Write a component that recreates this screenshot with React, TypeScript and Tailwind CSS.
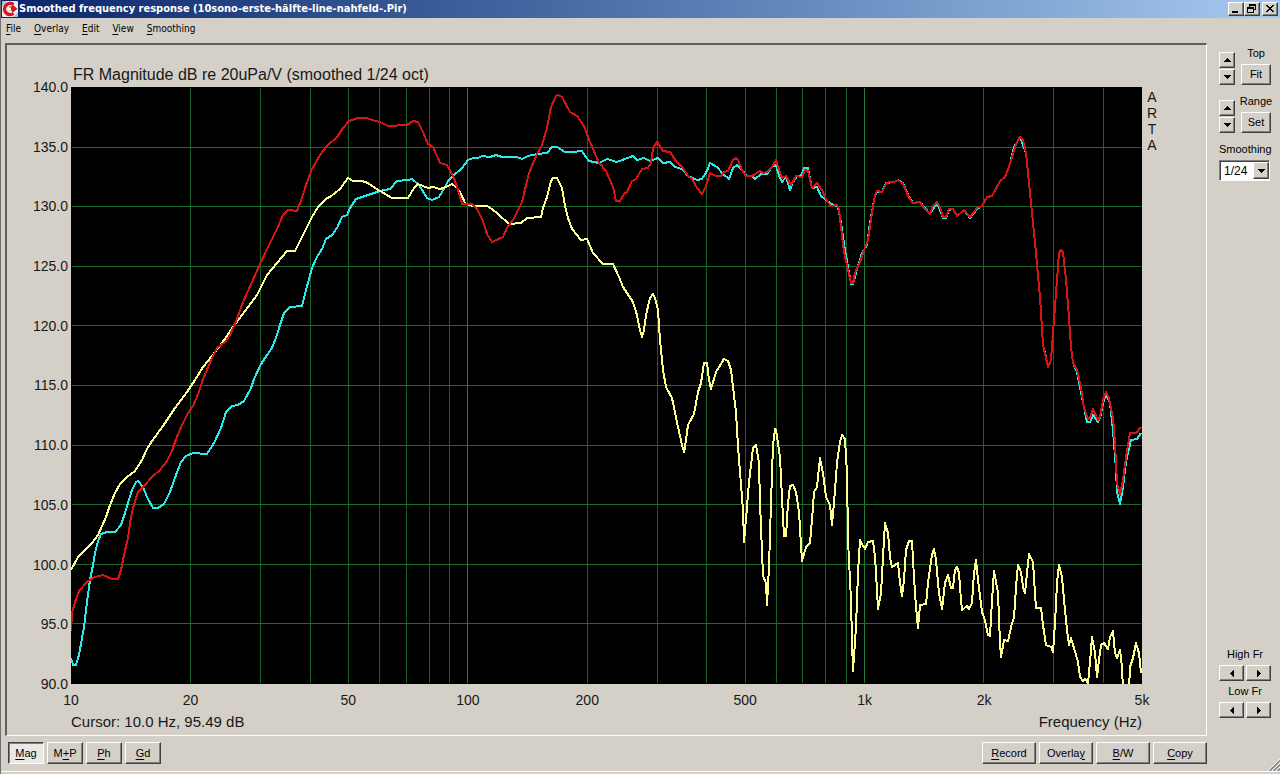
import type { ReactNode } from "react";

const F_MIN = 10;
const F_MAX = 5000;

// Curves are stored in the units of the plot's viewBox.
const PLOT = { x: 71, y: 87, w: 1071, h: 597 };

const YELLOW =
  "71,570 78,557 87,548 92,543 98,535 102,526 106,517 110,505 115,493 120,484 127,477 135,471 142,460 147,449 152,441 163,426 175,408 187,392 195,380 203,367 212,356 222,343 233,327 242,315 257,295 267,275 277,263 287,251 295,251 303,235 312,217 318,207 327,198 330,197 340,189 348,178 353,181 362,181 368,183 375,188 380,191 392,198 408,198 414,188 418,184 423,186 428,188 433,187 440,189 446,187 452,184 457,188 461,194 465,203 472,206 487,206 492,209 498,214 509,224 521,223 527,218 541,217 543,208 547,197 551,181 553,178 557,178 562,188 565,206 568,218 572,229 581,240 587,239 593,253 603,264 613,264 619,277 623,287 627,293 633,302 637,315 640,330 642,337 644,330 646,315 650,298 653,294 655,298 658,310 660,340 663,370 666,387 672,398 678,427 682,445 684,452 685,447 688,425 694,414 698,392 701,383 704,363 707,363 709,380 711,389 716,372 724,359 728,361 731,370 733,387 736,412 738,447 740,472 743,510 744,542 747,507 749,482 753,448 756,445 759,463 760,503 763,576 766,583 767,605 769,567 771,503 773,445 775,429 776,430 780,457 782,498 784,536 786,536 788,503 790,486 793,485 796,492 799,512 802,561 806,547 810,543 813,507 814,492 817,487 820,458 823,473 826,497 830,505 832,525 834,503 837,463 840,442 842,435 845,439 847,473 848,540 851,600 852,640 853,671 856,627 858,573 860,540 862,544 865,549 868,542 873,541 875,557 877,590 878,609 881,593 883,557 885,523 888,533 890,557 892,567 898,563 900,583 902,596 904,580 906,550 909,541 912,541 914,577 916,607 918,628 920,605 926,604 928,583 932,555 934,549 936,560 939,593 942,609 945,583 948,575 951,588 953,588 955,570 957,567 959,573 961,600 962,610 967,606 969,609 972,603 974,573 976,560 978,580 982,612 985,620 988,635 990,636 992,600 994,571 998,593 1000,643 1001,657 1004,640 1008,641 1012,623 1014,618 1016,587 1018,565 1021,572 1023,587 1025,593 1027,573 1029,554 1033,562 1035,593 1036,608 1041,608 1043,625 1046,645 1051,647 1053,652 1055,623 1057,583 1059,565 1062,577 1065,610 1067,630 1069,645 1071,638 1076,655 1078,662 1080,677 1083,681 1085,679 1088,683 1089,673 1091,650 1092,637 1095,653 1097,677 1099,660 1101,645 1104,643 1108,649 1110,637 1113,631 1115,653 1117,658 1120,650 1122,667 1123,690 1129,690 1130,667 1133,658 1136,643 1139,653 1141,673";

const CYAN =
  "71,658 73,665 76,665 79,655 82,638 84,627 87,602 90,580 93,565 95,553 98,541 101,534 107,532 115,532 121,525 125,513 128,503 132,490 136,482 138,481 143,487 147,497 153,508 158,508 164,504 170,492 176,475 181,462 186,456 193,453 207,454 214,443 221,428 226,412 232,406 238,405 244,401 251,388 254,379 261,364 267,355 272,348 277,335 280,325 284,313 290,307 302,306 306,290 312,268 317,257 322,249 326,239 332,235 337,228 342,217 347,215 350,208 356,199 368,195 380,191 390,189 397,181 408,180 412,179 419,185 427,198 432,200 439,197 445,187 448,181 453,176 462,168 468,160 473,158 478,158 482,156 490,157 496,155 502,157 517,157 522,159 528,156 537,154 547,153 552,147 557,147 565,152 573,152 582,151 585,156 589,161 599,163 607,159 617,162 625,159 633,156 637,160 644,158 650,161 658,158 663,163 670,162 675,167 682,169 688,176 697,180 702,179 707,171 710,163 717,167 723,174 729,179 733,168 737,165 742,170 747,176 752,176 755,179 761,174 767,174 772,167 776,165 778,173 782,182 786,177 790,190 793,182 797,176 801,176 804,168 808,168 812,188 817,187 821,196 830,203 838,207 841,223 845,250 851,284 853,284 856,273 862,253 867,245 870,223 875,195 877,192 882,192 886,183 894,182 898,180 903,183 909,197 913,203 920,202 930,214 937,203 943,218 946,218 949,210 953,209 957,216 964,210 970,218 977,209 982,206 987,197 992,196 1000,181 1005,177 1010,164 1014,147 1020,137 1026,153 1032,213 1036,253 1040,297 1043,345 1048,366 1051,360 1053,333 1056,293 1059,253 1061,251 1063,252 1066,280 1069,317 1071,347 1073,363 1077,372 1082,397 1087,422 1090,422 1093,415 1098,422 1100,418 1103,403 1106,395 1110,403 1113,430 1116,470 1117,492 1120,504 1123,487 1126,462 1131,440 1137,439 1141,433";

const RED =
  "71,631 72,613 75,602 79,591 88,581 95,577 103,575 112,579 118,579 121,570 124,555 128,538 130,523 132,512 135,501 138,492 143,487 153,476 160,470 167,461 172,451 176,439 182,425 188,413 193,406 199,392 203,379 212,358 217,348 225,342 230,335 237,319 243,302 252,282 260,264 268,247 277,229 283,215 288,210 297,211 302,198 306,185 312,169 320,155 327,146 337,137 343,128 349,121 358,118 367,118 372,120 380,122 388,126 407,125 413,121 418,122 423,132 428,144 433,147 440,163 447,165 454,178 458,190 462,204 472,204 477,209 483,221 487,234 492,242 503,237 508,226 513,220 522,202 529,173 537,154 542,145 547,128 551,107 556,96 558,95 562,97 570,112 577,116 584,126 590,142 599,163 606,171 613,187 616,201 620,201 624,194 627,192 632,181 636,179 642,169 648,168 651,163 653,148 657,142 663,151 670,152 676,161 683,168 688,176 692,179 697,188 702,194 706,186 710,173 716,176 721,176 724,172 728,171 733,160 736,158 738,160 742,170 746,176 752,176 760,171 763,173 767,172 772,167 776,160 778,167 782,178 786,176 791,185 796,176 802,177 805,170 808,171 812,188 817,183 822,190 827,201 831,206 837,205 839,209 841,227 844,252 848,270 851,283 853,283 855,273 860,262 864,250 868,240 872,213 875,195 877,191 882,192 886,184 889,182 894,182 898,180 903,184 909,198 913,203 920,202 924,208 930,214 933,206 937,202 940,207 943,217 946,217 949,209 953,209 957,216 964,210 970,217 977,208 982,206 987,197 992,196 1000,181 1005,177 1010,164 1015,147 1018,140 1020,137 1023,140 1026,153 1029,183 1032,213 1036,253 1040,297 1043,345 1048,367 1051,360 1053,333 1056,293 1059,253 1061,250 1063,252 1066,280 1069,317 1071,347 1073,363 1077,370 1081,387 1084,408 1088,419 1090,418 1093,409 1098,420 1100,417 1103,400 1106,392 1109,398 1113,418 1115,443 1117,483 1120,495 1123,480 1126,457 1130,433 1136,433 1141,427";

const LEVELS = ["140.0", "135.0", "130.0", "125.0", "120.0", "115.0", "110.0", "105.0", "100.0", "95.0", "90.0"];

const TICKS = [
  { f: 10, label: "10" },
  { f: 20, label: "20" },
  { f: 50, label: "50" },
  { f: 100, label: "100" },
  { f: 200, label: "200" },
  { f: 500, label: "500" },
  { f: 1000, label: "1k" },
  { f: 2000, label: "2k" },
  { f: 5000, label: "5k" },
];

const GRID_FREQS = [
  20, 30, 40, 50, 60, 70, 80, 90, 100, 200, 300, 400, 500, 600, 700, 800, 900, 1000, 2000, 3000, 4000,
];

const RAISED =
  "border border-t-white border-l-white border-r-[#404040] border-b-[#404040] bg-[#d4d0c8] shadow-[inset_-1px_-1px_0_#808080]";

function logPos(f: number) {
  return Math.log(f / F_MIN) / Math.log(F_MAX / F_MIN);
}

// "&" marks the letter that gets the keyboard underline
function Mnemonic({ text }: { text: string }) {
  const at = text.indexOf("&");
  return (
    <span className="whitespace-pre">
      {text.slice(0, at)}
      <u className="underline-offset-2">{text[at + 1]}</u>
      {text.slice(at + 2)}
    </span>
  );
}

function AppIcon() {
  return (
    <svg viewBox="0 0 16 16" className="size-4 shrink-0">
      <rect width="16" height="16" rx="1" fill="#e6f0f4" />
      <path d="M0 0h5L0 5zM16 16h-5l5-5z" fill="#9cc4dc" />
      <path d="M11.5 3.5A5.6 5.6 0 1 0 11.5 12.5" fill="none" stroke="#d81818" strokeWidth="3.4" />
      <path d="M7 5.5h3V3l5.5 5L10 12V9.500H7z" fill="#d81818" />
      <path d="M6 6.500h3v3H6z" fill="#fff" />
    </svg>
  );
}

function CaptionButton({ label, children }: { label: string; children: ReactNode }) {
  return (
    <button aria-label={label} className={`flex h-[14px] w-4 items-center justify-center ${RAISED}`}>
      <svg viewBox="0 0 12 10" className="h-[10px] w-3" shapeRendering="crispEdges">
        {children}
      </svg>
    </button>
  );
}

function TitleBar() {
  return (
    <header className="flex h-[18px] items-center bg-linear-to-r from-[#0a246a] to-[#a6caf0] pr-0.5 pl-px">
      <AppIcon />
      <h1 className="ml-px flex-1 truncate font-['DejaVu_Sans_Condensed','DejaVu_Sans',sans-serif] text-[11px] font-bold text-white">
        Smoothed frequency response (10sono-erste-hälfte-line-nahfeld-.Pir)
      </h1>
      <CaptionButton label="Minimize">
        <path d="M2 7h6v2H2z" />
      </CaptionButton>
      <CaptionButton label="Restore">
        <path d="M3 0h7v6H8V5h1V2H4v1H3z" />
        <path d="M1 3h7v6H1zM2 5v3h5V5z" fillRule="evenodd" />
      </CaptionButton>
      <div className="ml-0.5 flex">
        <CaptionButton label="Close">
          <path d="M2 1h2v1h1v1h2V2h1V1h2v1H9v1H8v1H7v1h1v1h1v1h1v1H8V7H7V6H5v1H4v1H2V7h1V6h1V5h1V4H4V3H3V2H2z" />
        </CaptionButton>
      </div>
    </header>
  );
}

function MenuBar() {
  return (
    <nav className="flex h-5 items-center gap-[13px] pl-[5px] font-['DejaVu_Sans_Condensed','DejaVu_Sans',sans-serif] text-[10px]">
      {["&File", "&Overlay", "&Edit", "&View", "&Smoothing"].map((item) => (
        <button key={item}>
          <Mnemonic text={item} />
        </button>
      ))}
    </nav>
  );
}

function Plot() {
  return (
    <svg
      viewBox={`${PLOT.x} ${PLOT.y} ${PLOT.w} ${PLOT.h}`}
      preserveAspectRatio="none"
      className="col-start-2 row-start-2 h-full w-full bg-black"
      shapeRendering="crispEdges"
      role="img"
      aria-label="Frequency response"
    >
      {GRID_FREQS.map((f) => {
        const x = Math.round(PLOT.x + logPos(f) * 1070) + 0.5;
        return <line key={f} x1={x} x2={x} y1="88" y2="683" stroke={f === 100 || f === 1000 ? "#267a38" : "#17602a"} />;
      })}
      {LEVELS.slice(1, -1).map((level, i) => {
        const y = Math.round(PLOT.y + (i + 1) * 59.6) + 0.5;
        return <line key={level} x1="72" x2="1141" y1={y} y2={y} stroke="#1a6b2c" />;
      })}
      <g fill="none" strokeWidth="2" strokeLinejoin="round">
        <polyline points={CYAN} stroke="#2ceaea" />
        <polyline points={YELLOW} stroke="#ffff92" />
        <polyline points={RED} stroke="#d81414" />
      </g>
    </svg>
  );
}

function ChartPanel() {
  return (
    <section className="grid min-h-0 flex-1 grid-cols-[64px_minmax(0,1fr)_64px] grid-rows-[42px_minmax(0,1fr)_51px] border-t-2 border-r border-b border-l-2 border-t-[#606060] border-r-white border-b-white border-l-[#606060] font-['Liberation_Sans',Arial,sans-serif] text-sm leading-4 text-[#181818]">
      <h2 className="col-start-2 row-start-1 self-end pb-1 pl-0.5 text-base leading-4">
        FR Magnitude dB re 20uPa/V (smoothed 1/24 oct)
      </h2>

      <div className="col-start-1 row-start-2 -my-2 flex flex-col justify-between pr-[3px] text-right">
        {LEVELS.map((level) => (
          <span key={level}>{level}</span>
        ))}
      </div>
      <Plot />
      <div className="col-start-3 row-start-2 flex w-5 flex-col pt-0.5 text-center">
        {["A", "R", "T", "A"].map((letter, i) => (
          <span key={i}>{letter}</span>
        ))}
      </div>

      <div className="col-start-2 row-start-3 pt-2">
        <div className="relative h-4">
          {TICKS.map(({ f, label }) => (
            <span key={f} className="absolute -translate-x-1/2" style={{ left: `${logPos(f) * 100}%` }}>
              {label}
            </span>
          ))}
        </div>
        <div className="flex justify-between pt-[6px] text-[15px] leading-4">
          <span>Cursor: 10.0 Hz, 95.49 dB</span>
          <span>Frequency (Hz)</span>
        </div>
      </div>
    </section>
  );
}

function Toolbar() {
  return (
    <footer className="flex justify-between pt-[6px] pl-[3px] font-['Liberation_Sans',Arial,sans-serif] text-[11px]">
      <div className="flex gap-[3px]">
        <button
          aria-pressed="true"
          className="h-[22px] w-9 border border-t-[#404040] border-r-white border-b-white border-l-[#404040] bg-[#eae8e4] shadow-[inset_1px_1px_0_#808080]"
        >
          <Mnemonic text="&Mag" />
        </button>
        {["M&+P", "&Ph", "&Gd"].map((item) => (
          <button key={item} className={`h-[22px] w-9 ${RAISED}`}>
            <Mnemonic text={item} />
          </button>
        ))}
      </div>
      <div className="flex gap-[3px]">
        {["&Record", "Overla&y", "&B/W", "&Copy"].map((item) => (
          <button key={item} className={`h-[22px] w-[54px] ${RAISED}`}>
            <Mnemonic text={item} />
          </button>
        ))}
      </div>
    </footer>
  );
}

function Spinner({ name }: { name: string }) {
  return (
    <div className="flex flex-col gap-px">
      <button aria-label={`${name} up`} className={`flex h-4 w-4 items-center justify-center ${RAISED}`}>
        <svg viewBox="0 0 7 4" className="h-1 w-[7px]" shapeRendering="crispEdges">
          <path d="M3 0h1v1h1v1h1v1h1v1H0V3h1V2h1V1h1z" />
        </svg>
      </button>
      <button aria-label={`${name} down`} className={`flex h-4 w-4 items-center justify-center ${RAISED}`}>
        <svg viewBox="0 0 7 4" className="h-1 w-[7px]" shapeRendering="crispEdges">
          <path d="M0 0h7v1H6v1H5v1H4v1H3V3H2V2H1V1H0z" />
        </svg>
      </button>
    </div>
  );
}

function ScaleControl({ name, action }: { name: string; action: string }) {
  return (
    <div className="flex items-end gap-[6px]">
      <Spinner name={name} />
      <div className="flex w-[30px] flex-col items-center gap-1">
        <span className="leading-[14px]">{name}</span>
        <button className={`h-[21px] w-[30px] ${RAISED}`}>{action}</button>
      </div>
    </div>
  );
}

function FreqControl({ name }: { name: string }) {
  return (
    <div className="flex flex-col items-center gap-1">
      <span className="leading-[14px]">{name}</span>
      <div className="flex gap-0.5">
        <button aria-label={`${name} lower`} className={`flex h-4 w-[25px] items-center justify-center ${RAISED}`}>
          <svg viewBox="0 0 4 7" className="h-[7px] w-1" shapeRendering="crispEdges">
            <path d="M4 0v7H3V6H2V5H1V4H0V3h1V2h1V1h1V0z" />
          </svg>
        </button>
        <button aria-label={`${name} higher`} className={`flex h-4 w-[25px] items-center justify-center ${RAISED}`}>
          <svg viewBox="0 0 4 7" className="h-[7px] w-1" shapeRendering="crispEdges">
            <path d="M0 0h1v1h1v1h1v1h1v1H3v1H2v1H1v1H0z" />
          </svg>
        </button>
      </div>
    </div>
  );
}

function SidePanel() {
  return (
    <aside className="flex w-[61px] shrink-0 flex-col justify-between pt-[3px] pr-[9px] pb-[53px] font-['Liberation_Sans',Arial,sans-serif] text-[11px]">
      <div className="flex flex-col gap-[9px]">
        <ScaleControl name="Top" action="Fit" />
        <ScaleControl name="Range" action="Set" />
        <div className="flex flex-col gap-1">
          <label htmlFor="smoothing" className="leading-[14px]">
            Smoothing
          </label>
          <div className="relative">
            <select
              id="smoothing"
              defaultValue="1/24"
              className="block h-[21px] w-[51px] appearance-none border border-t-[#808080] border-r-white border-b-white border-l-[#808080] bg-white pl-1 text-xs shadow-[inset_1px_1px_0_#404040]"
            >
              <option>1/24</option>
              <option>1/12</option>
              <option>1/6</option>
              <option>1/3</option>
            </select>
            <span
              className={`pointer-events-none absolute top-0.5 right-0.5 flex h-[17px] w-4 items-center justify-center ${RAISED}`}
            >
              <svg viewBox="0 0 7 4" className="h-1 w-[7px]" shapeRendering="crispEdges">
                <path d="M0 0h7v1H6v1H5v1H4v1H3V3H2V2H1V1H0z" />
              </svg>
            </span>
          </div>
        </div>
      </div>

      <div className="flex flex-col gap-[3px]">
        <FreqControl name="High Fr" />
        <FreqControl name="Low Fr" />
      </div>
    </aside>
  );
}

export default function App() {
  return (
    <div className="flex h-screen min-h-[480px] flex-col border-l border-[#707070] bg-[#d4d0c8] text-black">
      <TitleBar />
      <MenuBar />
      <div className="flex min-h-0 flex-1 gap-3 pt-[5px] pl-1">
        <main className="flex min-w-0 flex-1 flex-col pb-[7px]">
          <ChartPanel />
          <Toolbar />
        </main>
        <SidePanel />
      </div>
      <div className="flex justify-end border-b border-white">
        <svg viewBox="0 0 12 12" className="-mt-3 size-3" aria-hidden="true">
          <path d="M0 12 12 0M4 12l8-8M8 12l4-4" stroke="#fff" />
          <path d="M1.500 12 12 1.500M5.500 12 12 5.500M9.500 12 12 9.500" stroke="#808080" strokeWidth="1.500" />
        </svg>
      </div>
      <div className="h-0.5" />
    </div>
  );
}
